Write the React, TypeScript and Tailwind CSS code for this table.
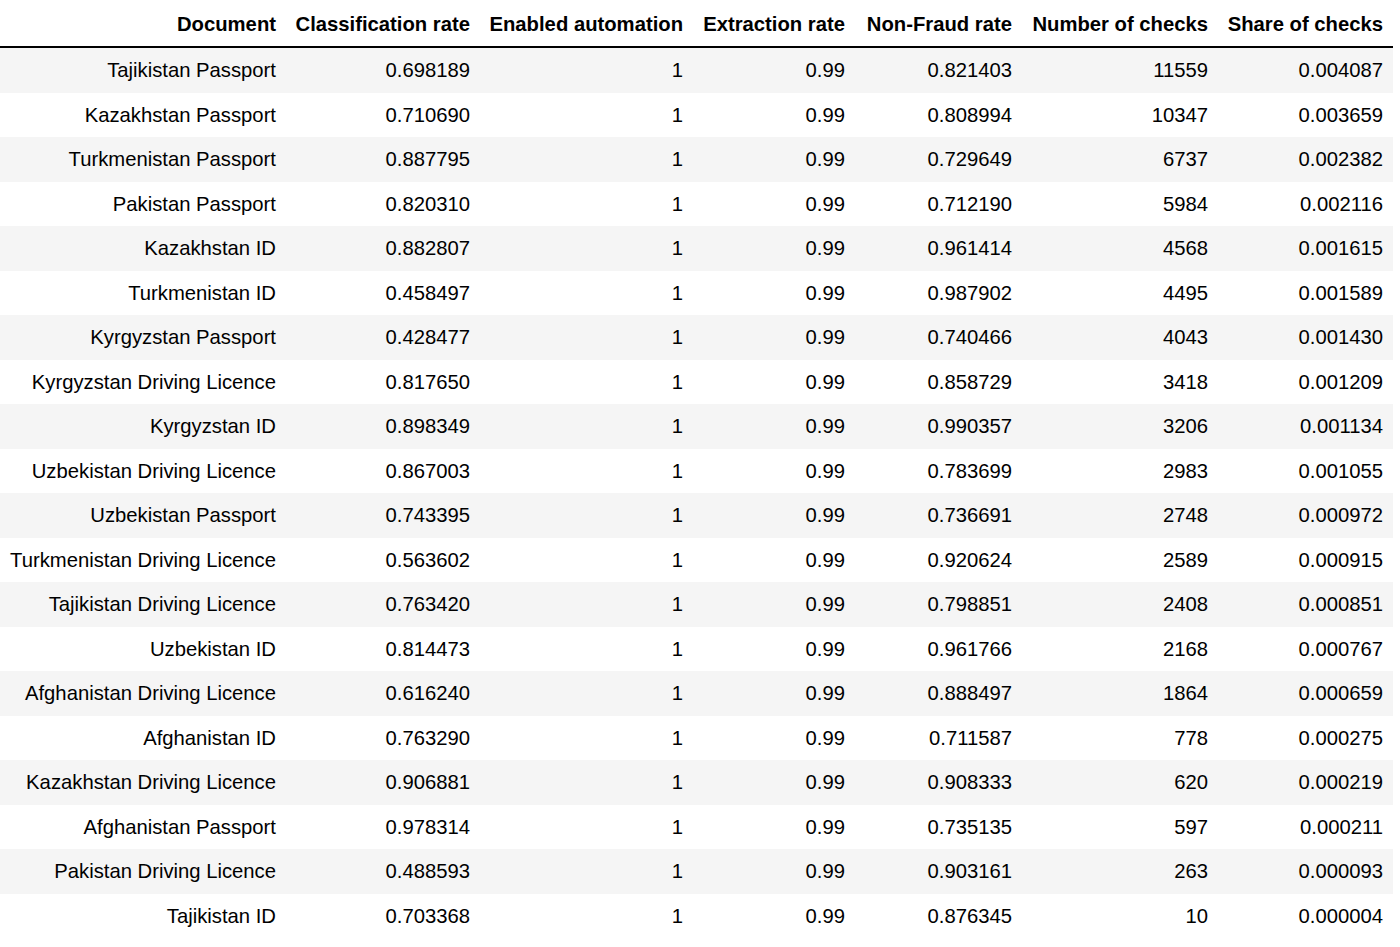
import React from "react";

const rows: [string, string, string, string, string, string, string][] = [
  ["Tajikistan Passport", "0.698189", "1", "0.99", "0.821403", "11559", "0.004087"],
  ["Kazakhstan Passport", "0.710690", "1", "0.99", "0.808994", "10347", "0.003659"],
  ["Turkmenistan Passport", "0.887795", "1", "0.99", "0.729649", "6737", "0.002382"],
  ["Pakistan Passport", "0.820310", "1", "0.99", "0.712190", "5984", "0.002116"],
  ["Kazakhstan ID", "0.882807", "1", "0.99", "0.961414", "4568", "0.001615"],
  ["Turkmenistan ID", "0.458497", "1", "0.99", "0.987902", "4495", "0.001589"],
  ["Kyrgyzstan Passport", "0.428477", "1", "0.99", "0.740466", "4043", "0.001430"],
  ["Kyrgyzstan Driving Licence", "0.817650", "1", "0.99", "0.858729", "3418", "0.001209"],
  ["Kyrgyzstan ID", "0.898349", "1", "0.99", "0.990357", "3206", "0.001134"],
  ["Uzbekistan Driving Licence", "0.867003", "1", "0.99", "0.783699", "2983", "0.001055"],
  ["Uzbekistan Passport", "0.743395", "1", "0.99", "0.736691", "2748", "0.000972"],
  ["Turkmenistan Driving Licence", "0.563602", "1", "0.99", "0.920624", "2589", "0.000915"],
  ["Tajikistan Driving Licence", "0.763420", "1", "0.99", "0.798851", "2408", "0.000851"],
  ["Uzbekistan ID", "0.814473", "1", "0.99", "0.961766", "2168", "0.000767"],
  ["Afghanistan Driving Licence", "0.616240", "1", "0.99", "0.888497", "1864", "0.000659"],
  ["Afghanistan ID", "0.763290", "1", "0.99", "0.711587", "778", "0.000275"],
  ["Kazakhstan Driving Licence", "0.906881", "1", "0.99", "0.908333", "620", "0.000219"],
  ["Afghanistan Passport", "0.978314", "1", "0.99", "0.735135", "597", "0.000211"],
  ["Pakistan Driving Licence", "0.488593", "1", "0.99", "0.903161", "263", "0.000093"],
  ["Tajikistan ID", "0.703368", "1", "0.99", "0.876345", "10", "0.000004"],
];

const headers = [
  "Document",
  "Classification rate",
  "Enabled automation",
  "Extraction rate",
  "Non-Fraud rate",
  "Number of checks",
  "Share of checks",
];

const grid = "grid grid-cols-[286px_194px_213px_162px_167px_196px_175px]";

export default function App() {
  return (
    <div
      className="w-[1400px] h-[947px] bg-white text-black overflow-hidden"
      style={{ fontFamily: '"Liberation Sans", Arial, Helvetica, sans-serif' }}
    >
      <div className="w-[1393px] text-[20.25px] leading-none">
        <div className={`${grid} h-[48px] border-b-2 border-black items-center font-bold`}>
          {headers.map((h) => (
            <div key={h} className="text-right pr-[10px] pt-[3px] whitespace-nowrap">
              {h}
            </div>
          ))}
        </div>
        {rows.map((r, i) => (
          <div
            key={r[0]}
            className={`${grid} h-[44.5px] items-center ${i % 2 === 0 ? "bg-[#f5f5f5]" : "bg-white"}`}
          >
            {r.map((c, j) => (
              <div key={j} className="text-right pr-[10px] whitespace-nowrap">
                {c}
              </div>
            ))}
          </div>
        ))}
      </div>
    </div>
  );
}
